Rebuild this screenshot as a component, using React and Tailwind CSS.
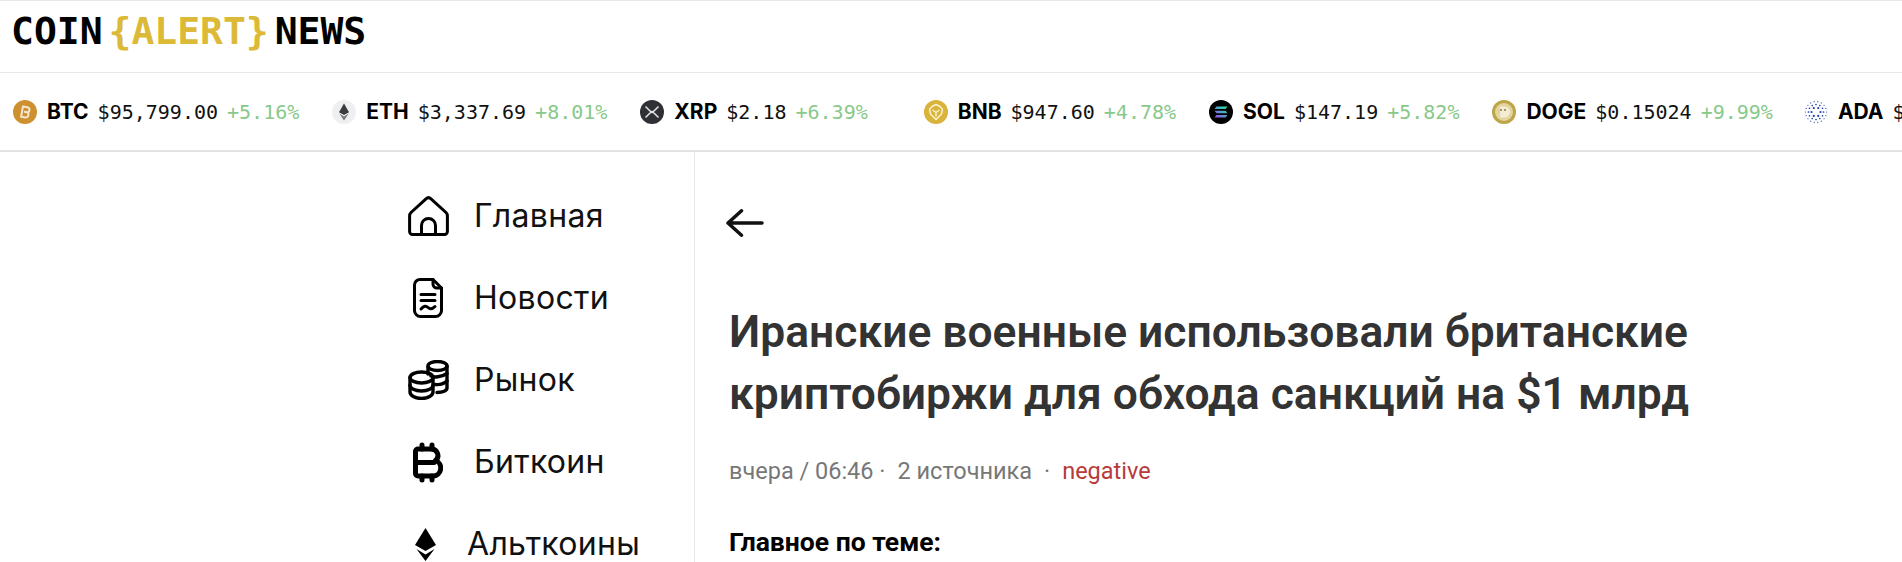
const HomeIcon = () => (
    <svg width="41" height="40" viewBox="0 0 41 40" fill="none" stroke="black" strokeWidth="3" strokeLinejoin="round" strokeLinecap="round">
        <path d="M18 2.8 3 16.5 A5 5 0 0 0 1.6 20 V35.5 A3 3 0 0 0 4.6 38.5 H36.4 A3 3 0 0 0 39.4 35.5 V20 A5 5 0 0 0 38 16.5 L23 2.8 A3.7 3.7 0 0 0 18 2.8 Z" />
        <path d="M13.5 38.5 V29.5 A7 7 0 0 1 27.5 29.5 V38.5" />
    </svg>
);

const NewsIcon = () => (
    <svg width="30" height="40" viewBox="0 0 30 40" fill="none" stroke="black" strokeWidth="3" strokeLinejoin="round" strokeLinecap="round">
        <path d="M7 1.5 H20 L28.5 10 V32.5 A6 6 0 0 1 22.5 38.5 H7.5 A6 6 0 0 1 1.5 32.5 V7 A5.5 5.5 0 0 1 7 1.5 Z" />
        <path d="M20 1.5 V6 A4 4 0 0 0 24 10 H28.5" />
        <path d="M8 16.5 H22 M8 22.5 H22" />
        <path d="M8 31 C11 27.5 13 27.5 15 29.5 C17 31.5 19 31.5 22 28.5" />
    </svg>
);

const CoinsIcon = () => (
    <svg width="41" height="40" viewBox="0 0 41 40" fill="none" stroke="black" strokeWidth="3.4" strokeLinejoin="round" strokeLinecap="round">
        <ellipse cx="29.5" cy="6" rx="9.5" ry="4.5" />
        <path d="M20 7 V14 M39 6 V28 C39 30.5 35 32.5 29 32.5" />
        <path d="M23 16 C26 17.5 33 17.5 39 13.5 M27 24.5 C32 25 36 24 39 21" />
        <ellipse cx="13.5" cy="17.5" rx="11.5" ry="5.5" />
        <path d="M2 17.5 V32 C2 35.5 7 38.5 13.5 38.5 C20 38.5 25 35.5 25 32 V17.5" />
        <path d="M2 25 C2 28.5 7 31 13.5 31 C20 31 25 28.5 25 25" />
    </svg>
);

const BitcoinIcon = () => (
    <svg width="30" height="41" viewBox="0 0 30 41" fill="none" stroke="black" strokeWidth="5" strokeLinejoin="round" strokeLinecap="round">
        <path d="M5 7 H18 A6.5 6.5 0 0 1 22.5 18.5 A8 8 0 0 1 20 34 H5 A2.5 2.5 0 0 1 2.5 31.5 V9.5 A2.5 2.5 0 0 1 5 7 Z" />
        <path d="M2.5 20.5 H21" />
        <path d="M9 3 V7 M19 3 V7 M9 34 V38 M19 34 V38" />
    </svg>
);

const EthIcon = () => (
    <svg width="21" height="33" viewBox="0 0 21 33">
        <path d="M10.5 0 L21 17 L10.5 23 L0 17 Z" fill="black" />
        <path d="M1.5 21 L10.5 26.5 L19.5 21 L10.5 33 Z" fill="black" />
    </svg>
);

const BackArrow = () => (
    <svg width="38" height="28" viewBox="0 0 38 28" fill="none" stroke="#111" strokeWidth="3.5" strokeLinecap="round" strokeLinejoin="round" className="-ml-[3px]">
        <path d="M36 14 H2 M15.5 1.8 L2 14 L15.5 26.2" />
    </svg>
);

const BtcCoin = () => (
    <svg width="24" height="24" viewBox="0 0 24 24">
        <circle cx="12" cy="12" r="12" fill="#cf9030" />
        <path d="M9 7 H13.5 A2.6 2.6 0 0 1 14.5 12 A2.9 2.9 0 0 1 13.5 17.4 H9 Z M11 12 H14" fill="none" stroke="#f5e6cf" strokeWidth="2" transform="rotate(10 12 12)" />
    </svg>
);

const EthCoin = () => (
    <svg width="24" height="24" viewBox="0 0 24 24">
        <circle cx="12" cy="12" r="12" fill="#eeeff0" />
        <path d="M12 3.5 L17 12.2 L12 15 L7 12.2 Z" fill="#3c3c3d" />
        <path d="M7.3 13.6 L12 16.4 L16.7 13.6 L12 20.5 Z" fill="#77777a" />
    </svg>
);

const XrpCoin = () => (
    <svg width="24" height="24" viewBox="0 0 24 24">
        <circle cx="12" cy="12" r="12" fill="#2f3036" />
        <path d="M5.5 6.5 L9.5 10.5 C11 12 13 12 14.5 10.5 L18.5 6.5 M5.5 17.5 L9.5 13.5 C11 12 13 12 14.5 13.5 L18.5 17.5" fill="none" stroke="#e6e6e6" strokeWidth="1.5" />
    </svg>
);

const BnbCoin = () => (
    <svg width="24" height="24" viewBox="0 0 24 24">
        <circle cx="12" cy="12" r="12" fill="#dab33a" />
        <path d="M12 4.5 L16 6.5 L18.5 9.5 L17.5 14 L12 19.5 L6.5 14 L5.5 9.5 L8 6.5 Z M8.5 10 L12 12.5 L15.5 10 M12 12.5 V16.5" fill="none" stroke="#fbf3d4" strokeWidth="1.4" strokeLinejoin="round" />
    </svg>
);

const SolCoin = () => (
    <svg width="24" height="24" viewBox="0 0 24 24">
        <defs>
            <linearGradient id="sol" x1="0" y1="1" x2="1" y2="0">
                <stop offset="0" stopColor="#9945ff" />
                <stop offset="1" stopColor="#14f195" />
            </linearGradient>
        </defs>
        <circle cx="12" cy="12" r="12" fill="#000" />
        <path d="M7.5 6.5 H18.5 L16.5 9 H5.5 Z M5.5 10.8 H16.5 L18.5 13.2 H7.5 Z M7.5 15 H18.5 L16.5 17.5 H5.5 Z" fill="url(#sol)" />
    </svg>
);

const DogeCoin = () => (
    <svg width="24" height="24" viewBox="0 0 24 24">
        <circle cx="12" cy="12" r="12" fill="#bda548" />
        <circle cx="12" cy="12" r="9" fill="#e3d5a0" />
        <path d="M8 6.5 H12.5 A5.5 5.5 0 0 1 12.5 17.5 H8 Z" fill="#f4edd2" />
        <path d="M9 9 V11 M13 9 V11" stroke="#6b5c25" strokeWidth="1.2" />
    </svg>
);

const AdaCoin = () => {
    const dots = [];
    for (let ring = 0; ring < 3; ring++) {
        const count = 6 * (ring + 1);
        for (let i = 0; i < count; i++) {
            const angle = (i / count) * Math.PI * 2;
            const radius = 4.5 + ring * 3;
            dots.push(
                <circle key={`${ring}-${i}`} cx={12 + Math.cos(angle) * radius} cy={12 + Math.sin(angle) * radius} r={1.1 - ring * 0.25} fill="#1f3fb0" />
            );
        }
    }
    return (
        <svg width="24" height="24" viewBox="0 0 24 24">
            {dots}
        </svg>
    );
};

const coins = [
    { symbol: "BTC", price: "$95,799.00", change: "+5.16%", Icon: BtcCoin, className: "" },
    { symbol: "ETH", price: "$3,337.69", change: "+8.01%", Icon: EthCoin, className: "" },
    { symbol: "XRP", price: "$2.18", change: "+6.39%", Icon: XrpCoin, className: "mr-[23px]" },
    { symbol: "BNB", price: "$947.60", change: "+4.78%", Icon: BnbCoin, className: "" },
    { symbol: "SOL", price: "$147.19", change: "+5.82%", Icon: SolCoin, className: "" },
    { symbol: "DOGE", price: "$0.15024", change: "+9.99%", Icon: DogeCoin, className: "-mr-[2px]" },
    // the ticker runs off the page here, only the dollar sign is visible
    { symbol: "ADA", price: "$", change: "", Icon: AdaCoin, className: "" },
];

const navItems = [
    { label: "Главная", Icon: HomeIcon, iconBox: "w-[66px] pl-0" },
    { label: "Новости", Icon: NewsIcon, iconBox: "w-[66px] pl-[5px]" },
    { label: "Рынок", Icon: CoinsIcon, iconBox: "w-[66px] pl-0" },
    { label: "Биткоин", Icon: BitcoinIcon, iconBox: "w-[66px] pl-[5px]" },
    { label: "Альткоины", Icon: EthIcon, iconBox: "w-[59px] pl-[7px]" },
];

function App() {
    return (
        <div className="h-[562px] overflow-hidden bg-white font-['Roboto',sans-serif]">
            <header className="h-[73px] border-y border-[#e8e8e8] flex items-center pl-[11px] pb-[12px]">
                <div className="font-['DejaVu_Sans_Mono',monospace] font-bold text-[38px] leading-none text-black flex">
                    <span>COIN</span>
                    <span className="text-[#dcb937] ml-[6px] mr-[6px]">{"{ALERT}"}</span>
                    <span>NEWS</span>
                </div>
            </header>

            <div className="h-[79px] border-b-2 border-[#e2e2e2] flex items-center gap-[33px] pl-[13px] overflow-hidden whitespace-nowrap">
                {coins.map(({ symbol, price, change, Icon, className }) => (
                    <div key={symbol} className={`flex items-center shrink-0 ${className}`}>
                        <Icon />
                        <span className="ml-[10px] font-['Inter',sans-serif] font-bold text-[21px] text-black">{symbol}</span>
                        <span className="ml-[9px] font-['DejaVu_Sans_Mono',monospace] text-[20px] text-[#111]">{price}</span>
                        {change && <span className="ml-[9px] font-['DejaVu_Sans_Mono',monospace] text-[20px] text-[#88c98a]">{change}</span>}
                    </div>
                ))}
            </div>

            <div className="flex">
                <nav className="w-[695px] shrink-0 border-r border-[#e8e8e8] pl-[408px] pt-[44px] flex flex-col gap-[42px] h-[420px]">
                    {navItems.map(({ label, Icon, iconBox }) => (
                        <div key={label} className="flex items-center h-[40px]">
                            <div className={`${iconBox} shrink-0 flex items-center`}>
                                <Icon />
                            </div>
                            <span className="font-['Inter',sans-serif] text-[32px] tracking-[0.3px] leading-none text-[#111]">{label}</span>
                        </div>
                    ))}
                </nav>

                <main className="flex-1 pl-[34px] pt-[57px]">
                    <BackArrow />
                    <h1 className="mt-[64px] w-[1100px] text-[44.4px] leading-[62px] font-semibold text-[#333]">
                        Иранские военные использовали британские<br />криптобиржи для обхода санкций на $1 млрд
                    </h1>
                    <div className="mt-[31px] text-[23.5px] leading-[30px] text-[#777] flex">
                        <span>вчера / 06:46 ·</span>
                        <span className="ml-[12px]">2 источника</span>
                        <span className="ml-[12px]">·</span>
                        <span className="ml-[12px] text-[#b93a3a]">negative</span>
                    </div>
                    <p className="mt-[40px] text-[26.5px] leading-[32px] font-bold text-black">Главное по теме:</p>
                </main>
            </div>
        </div>
    );
}

export default App;
